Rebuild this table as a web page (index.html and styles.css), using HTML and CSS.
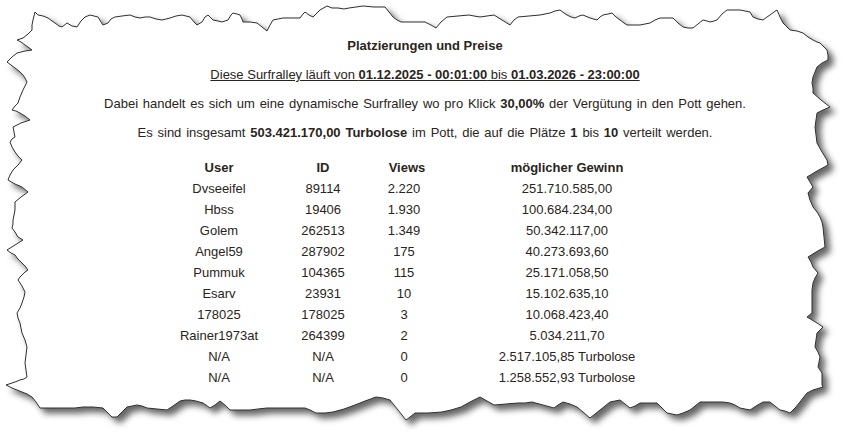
FILE: index.html
```html
<!DOCTYPE html>
<html lang="de">
<head>
<meta charset="utf-8">
<title>Platzierungen und Preise</title>
<link rel="stylesheet" href="styles.css">
</head>
<body>
<div class="page">
  <svg class="paper" width="852" height="442" viewBox="0 0 852 442" aria-hidden="true">
    <defs>
      <filter id="shadow" x="-5%" y="-5%" width="115%" height="115%">
        <feDropShadow dx="5" dy="5" stdDeviation="3" flood-color="#000" flood-opacity="0.6"/>
      </filter>
    </defs>
    <polygon filter="url(#shadow)" fill="#fff" stroke="#2e2e2e" stroke-width="1" stroke-linejoin="miter"
      points="35,12 38,15 43,16 48,18 52,21 55,23 59,26 62,27 67,23 72,26 77,27 81,21 85,17 90,15 94,16 98,17 101,22 103,25 108,23 111,19 115,17 122,16 130,15 135,17 140,18 145,17 150,17 156,19 162,20 166,19 170,18 176,16 182,15 186,16 190,17 194,22 197,25 202,22 205,17 208,15 211,18 213,20 218,21 222,22 225,21 228,20 231,15 233,13 237,14 240,15 242,19 243,22 250,22 257,23 262,27 267,31 270,25 273,20 278,19 283,18 292,18 300,18 303,14 305,12 309,15 313,17 320,10 327,6 332,8 338,8 344,9 349,8 356,7 363,6 374,7 385,7 389,12 393,17 397,20 401,22 413,22 425,22 431,25 436,28 441,22 447,17 458,16 469,15 474,16 480,17 487,16 494,15 502,20 510,25 514,20 518,17 529,16 540,15 545,14 550,13 555,11 560,10 564,13 567,15 571,17 575,18 579,16 583,15 590,18 597,20 600,17 603,15 608,14 612,13 616,17 620,20 624,23 627,25 634,25 640,25 645,24 650,23 655,20 660,18 667,18 673,18 678,23 683,27 688,28 693,28 698,24 703,20 707,21 710,22 714,21 717,20 722,14 727,10 734,10 740,10 745,11 750,12 753,17 758,19 763,20 767,17 770,15 774,12 777,10 780,17 783,23 787,27 790,30 797,31 803,33 808,37 813,40 817,42 820,43 824,47 827,50 828,55 828,60 822,63 817,67 815,72 813,77 812,83 813,88 813,93 821,100 830,107 823,110 817,113 816,120 815,127 816,135 817,143 822,152 827,160 828,165 817,171 807,177 810,182 813,187 808,193 810,200 813,207 817,212 820,217 822,222 823,227 824,237 825,247 816,252 808,257 811,262 813,267 818,273 815,278 813,283 812,290 812,297 812,305 812,313 807,317 812,320 817,323 823,327 817,333 816,340 815,347 818,352 820,357 818,367 822,373 822,379 822,385 823,387 813,390 807,393 803,398 800,402 795,408 790,413 785,411 780,410 775,406 770,402 763,402 756,406 750,410 745,409 740,408 735,405 730,403 723,402 717,402 708,402 700,402 695,406 690,410 683,413 677,415 672,414 667,413 662,408 657,403 648,403 640,403 635,406 630,408 625,404 620,400 615,401 610,402 605,406 600,410 595,414 590,418 583,412 577,407 570,404 563,402 558,405 554,408 543,405 532,402 525,403 518,403 506,404 494,405 487,401 480,397 470,402 461,407 451,410 442,412 428,413 415,413 410,417 406,420 398,410 390,400 383,398 376,397 365,401 355,405 344,409 333,412 325,413 316,413 310,410 305,408 300,408 291,408 283,408 275,408 267,408 258,409 250,410 240,410 230,410 225,405 220,401 215,405 210,408 206,405 203,403 196,401 190,400 185,400 180,401 173,406 167,410 157,409 147,408 142,406 137,405 132,406 127,407 122,412 117,417 112,417 107,412 103,408 93,407 83,407 75,408 67,408 60,408 53,408 46,408 40,408 36,402 32,397 27,394 22,392 17,390 12,388 6,385 12,383 15,382 20,380 24,379 27,377 26,370 25,363 26,355 27,347 25,340 22,333 21,328 20,323 18,318 17,313 20,308 22,303 24,297 25,292 22,286 18,280 20,277 22,275 25,272 28,270 25,266 22,263 18,259 15,255 11,253 7,250 15,245 23,240 18,237 15,232 12,228 13,224 13,220 14,215 15,210 15,206 15,202 21,197 28,192 22,187 15,184 8,180 10,175 13,170 18,165 22,160 18,156 15,152 12,147 10,142 12,139 15,137 14,132 13,127 21,123 30,120 25,116 20,113 16,111 12,110 15,106 18,103 19,100 20,97 23,90 27,82 25,78 23,75 19,71 15,68 11,65 7,62 12,57 17,53 25,51 32,50 28,47 25,45 21,42 17,40 20,39 23,38 28,34 32,30 32,25 33,20 34,16"/>
  </svg>

  <main class="content">
    <p class="title">Platzierungen und Preise</p>
    <p class="period">Diese Surfralley läuft von <b>01.12.2025 - 00:01:00</b> bis <b>01.03.2026 - 23:00:00</b></p>
    <p class="line">Dabei handelt es sich um eine dynamische Surfralley wo pro Klick <b>30,00%</b> der Vergütung in den Pott gehen.</p>
    <p class="line">Es sind insgesamt <b>503.421.170,00 Turbolose</b> im Pott, die auf die Plätze <b>1</b> bis <b>10</b> verteilt werden.</p>

    <div class="ranking">
      <div class="row head">
        <span>User</span><span>ID</span><span class="views">Views</span><span>möglicher Gewinn</span>
      </div>
      <div class="row"><span>Dvseeifel</span><span>89114</span><span>2.220</span><span>251.710.585,00</span></div>
      <div class="row"><span>Hbss</span><span>19406</span><span>1.930</span><span>100.684.234,00</span></div>
      <div class="row"><span>Golem</span><span>262513</span><span>1.349</span><span>50.342.117,00</span></div>
      <div class="row"><span>Angel59</span><span>287902</span><span>175</span><span>40.273.693,60</span></div>
      <div class="row"><span>Pummuk</span><span>104365</span><span>115</span><span>25.171.058,50</span></div>
      <div class="row"><span>Esarv</span><span>23931</span><span>10</span><span>15.102.635,10</span></div>
      <div class="row"><span>178025</span><span>178025</span><span>3</span><span>10.068.423,40</span></div>
      <div class="row"><span>Rainer1973at</span><span>264399</span><span>2</span><span>5.034.211,70</span></div>
      <div class="row"><span>N/A</span><span>N/A</span><span>0</span><span>2.517.105,85 Turbolose</span></div>
      <div class="row"><span>N/A</span><span>N/A</span><span>0</span><span>1.258.552,93 Turbolose</span></div>
    </div>
  </main>
</div>
</body>
</html>
```

FILE: styles.css
```css
html, body {
  margin: 0;
  padding: 0;
  background: #ffffff;
}

body {
  font-family: "Liberation Sans", Arial, sans-serif;
  font-size: 13px;
  color: #2a2420;
}

.page {
  position: relative;
  width: 852px;
  height: 442px;
  overflow: hidden;
}

.paper {
  position: absolute;
  left: 0;
  top: 0;
  z-index: 0;
}

.content {
  position: relative;
  z-index: 1;
  width: 850px;
  padding-top: 38px;
  text-align: center;
}

.content p {
  margin: 0 0 13px 0;
  line-height: 16px;
}

.title {
  font-weight: bold;
}

.period {
  text-decoration: underline;
}

.line {
  word-spacing: 1.2px;
}

.ranking {
  margin-left: 170px;
  margin-top: 16px;
  display: flex;
  flex-direction: column;
}

.row {
  display: grid;
  grid-template-columns: 98px 110px 52px 274px;
  height: 21px;
  line-height: 21px;
  text-align: center;
}

.row.head {
  font-weight: bold;
}

.row.head .views {
  padding-left: 6px;
}
```
